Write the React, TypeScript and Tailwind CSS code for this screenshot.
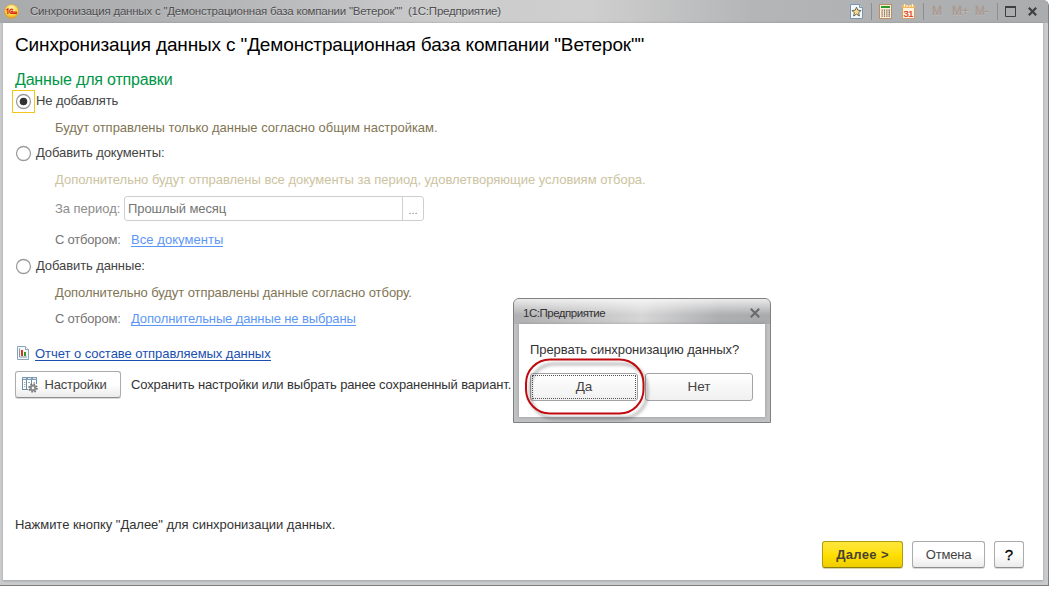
import type { ReactNode } from "react";

function Radio({ checked = false }: { checked?: boolean }) {
  return (
    <span
      className={
        checked
          ? "flex h-[23px] w-[23px] shrink-0 items-center justify-center border border-[#f3c61c]"
          : "flex h-[23px] w-[23px] shrink-0 items-center justify-center"
      }
    >
      <svg width="17" height="17" viewBox="0 0 17 17">
        <circle cx="8.5" cy="8.5" r="7" fill="#fff" stroke="#9c9c9c" strokeWidth="1.3" />
        {checked && <circle cx="8.5" cy="8.5" r="3.8" fill="#333" />}
      </svg>
    </span>
  );
}

function RadioRow({ checked, className, children }: { checked?: boolean; className: string; children: ReactNode }) {
  return (
    <div className={`${className} -ml-[3px] flex h-[23px] items-center`}>
      <Radio checked={checked} />
      <span className="-mt-px ml-px tracking-[-0.1px]">{children}</span>
    </div>
  );
}

function StarDoc() {
  return (
    <svg width="13" height="15" viewBox="0 0 13 15">
      <path d="M.5.5h9l3 3v11H.5z" fill="#f4f8fb" stroke="#7b96ab" />
      <path d="M9.5.5v3h3" fill="#c8dae6" stroke="#7b96ab" />
      <path d="M6.5 3.2l1.3 3 3.3.3-2.500 2.200.8 3.300-2.900-1.800-2.900 1.800.8-3.300-2.500-2.200 3.300-.3z" fill="#fbd98c" stroke="#5b5b50" strokeWidth=".9" />
    </svg>
  );
}

function Calculator() {
  return (
    <svg width="13" height="15" viewBox="0 0 13 15">
      <rect x=".5" y=".5" width="12" height="14" fill="#fdf0d8" stroke="#b98f68" />
      <rect x="2" y="2" width="9" height="2" fill="#2c9a2a" />
      {[5.5, 7.5, 9.5, 11.5].map((y) => (
        <g key={y} fill="#6b4b38">
          <rect x="2.5" y={y} width="1.2" height="1.2" />
          <rect x="4.9" y={y} width="1.2" height="1.2" />
          <rect x="7.3" y={y} width="1.2" height="1.2" />
          <rect x="9.6" y={y} width="1.2" height="1.2" fill="#333" />
        </g>
      ))}
    </svg>
  );
}

function CalendarIcon() {
  return (
    <svg width="13" height="15" viewBox="0 0 13 15">
      <rect x=".5" y="1.5" width="12" height="13" fill="#fdf3dc" stroke="#cf9f6e" />
      <rect x="0" y="1" width="13" height="3" fill="#f0b565" />
      <path d="M2.5 0v3M5 1v2M8 1v2M10.5 0v3" stroke="#fff3d0" strokeWidth="1.2" />
      <text x="6.5" y="13" textAnchor="middle" fontFamily="Liberation Sans" fontSize="9.500" fill="#e2331c" stroke="#e2331c" strokeWidth=".2" textLength="10">31</text>
    </svg>
  );
}

function ReportIcon() {
  return (
    <svg width="12" height="14" viewBox="0 0 12 14">
      <path d="M.5.5h8l3 3v10H.5z" fill="#f3f8fb" stroke="#8ca3b5" />
      <path d="M8.5.5v3h3" fill="#fff" stroke="#8ca3b5" />
      <path d="M2.5 2.500v8.500h7.500" fill="none" stroke="#8297a8" />
      <rect x="4" y="4" width="2" height="6" fill="#e0301e" />
      <rect x="7" y="6" width="2" height="4" fill="#2c9a2a" />
    </svg>
  );
}

function SettingsIcon() {
  return (
    <svg width="16" height="16" viewBox="0 0 16 16">
      <rect x=".5" y=".5" width="14" height="12" fill="#fbfdfe" />
      <rect x="0" y="0" width="15" height="3" fill="#7f9cb4" />
      <path d="M1 1.500h3M6 1.500h3M11 1.500h3" stroke="#dce8f0" />
      <path d="M.5 3v9.500M4.500 3v9.500M9.500 3v4M14.500 3v4M0 12.500h6" stroke="#6f8ca5" fill="none" />
      <path d="M2 5.500h1.500M2 7.500h1.500M2 9.500h1.500M6 5.500h2M11.500 5.500h1.500" stroke="#9eb3c4" fill="none" />
      <circle cx="11" cy="11" r="3.900" fill="none" stroke="#777" strokeWidth="1.800" strokeDasharray="1.600 1.460" />
      <circle cx="11" cy="11" r="2.400" fill="#d2d2d2" stroke="#888" strokeWidth="2" />
      <circle cx="11" cy="11" r="1" fill="#fff" />
    </svg>
  );
}

function Divider() {
  return <span className="h-[17px] w-px bg-[#8d8e90]" />;
}

function TitleBar() {
  return (
    <div className="flex h-[23px] shrink-0 items-center rounded-tr-[5px] bg-[linear-gradient(90deg,#a9aaac_0%,#b3b4b6_20%,#cbcbcc_42%,#cfcfcf_56%,#b4b5b7_72%,#abacae_100%)] pr-[11px] pb-px pl-[4px] text-[#4e4e50]">
      <svg width="15" height="15" viewBox="0 0 15 15" className="shrink-0">
        <defs>
          <radialGradient id="logo" cx=".5" cy=".3" r=".7">
            <stop offset="0" stopColor="#fff8c0" />
            <stop offset=".6" stopColor="#fbd946" />
            <stop offset="1" stopColor="#dd9a20" />
          </radialGradient>
        </defs>
        <circle cx="7.500" cy="7.500" r="7" fill="url(#logo)" stroke="#d69a45" strokeWidth=".6" />
        <path d="M2.300 5.900L3.900 4.800V10M9 5.700C7.800 4.500 5.700 5.200 5.700 7.300C5.700 9.200 7 9.500 8.200 9.500H13M8.800 7.300C7.500 6.400 7 8.100 8.300 8.100H13" fill="none" stroke="#d8241b" strokeWidth="1.200" />
      </svg>
      <span className="ml-[11px] text-[11.5px] tracking-[-0.22px] whitespace-pre [text-shadow:0_1px_0_#ffffff60]">
        {'Синхронизация данных с "Демонстрационная база компании "Ветерок""  (1С:Предприятие)'}
      </span>
      <div className="ml-auto flex h-full items-center">
        <StarDoc />
        <span className="ml-[8px] flex"><Divider /></span>
        <span className="ml-[7px]"><Calculator /></span>
        <span className="ml-[10px]"><CalendarIcon /></span>
        <span className="ml-[8px] flex"><Divider /></span>
        <div className="ml-[8px] flex w-[65px] items-center text-[12px] tracking-[-0.1px] text-[#a8978c] [text-shadow:0_1px_0_#ffffff50] [-webkit-text-stroke:0.3px_#a8978c]">
          <span className="w-[20px]">M</span>
          <span className="w-[23px]">M+</span>
          <span>M-</span>
        </div>
        <Divider />
        <svg className="ml-[7px]" width="11" height="11" viewBox="0 0 11 11">
          <path d="M.5 1.500h10v9H.5z" fill="none" stroke="#3f3f41" />
          <path d="M0 1h11" stroke="#3f3f41" strokeWidth="2" />
        </svg>
        <svg className="ml-[12px]" width="9" height="9" viewBox="0 0 9 9">
          <path d="M.8.8l7.400 7.400M8.200.8L.8 8.200" stroke="#3f3f41" strokeWidth="2.200" />
        </svg>
      </div>
    </div>
  );
}

const button =
  "flex h-[27px] items-center justify-center rounded-[3px] border border-[#ababab] border-b-[#8e8e8e] bg-linear-to-b from-white via-white to-[#ebebeb] text-[13px] text-[#444] shadow-[0_1px_0_#9b9b9b60]";

const dialogButton =
  "flex h-[28px] w-[108px] items-center justify-center rounded-[3px] border border-[#a3a3a3] bg-linear-to-b from-white to-[#f0f0f0] text-[13.5px] text-[#444]";

function Dialog() {
  return (
    <div className="absolute top-[298px] left-[513px] flex h-[125px] w-[258px] flex-col rounded-t-[6px] border border-[#818181] bg-[#c0c1c3] px-[5px] pb-[5px]">
      <div className="-mx-[5px] flex h-[25px] shrink-0 items-center rounded-t-[5px] bg-[linear-gradient(180deg,#ffffffc0_0,#ffffff00_16px),linear-gradient(90deg,#b1b1b3_0%,#c9c9ca_35%,#d6d6d7_50%,#aeafb1_80%,#a9aaac_100%)] pt-[3px] pr-[10px] pl-[9px] text-[11.5px] tracking-[-0.48px] text-[#333]">
        <span>1С:Предприятие</span>
        <svg className="ml-auto" width="10" height="10" viewBox="0 0 10 10">
          <path d="M.8.8l8.400 8.400M9.200.8L.8 9.200" stroke="#69696b" strokeWidth="2" />
        </svg>
      </div>
      <div className="flex grow flex-col bg-white pt-[16px] pl-[11px] shadow-[0_0_3px_#77777790]">
        <span className="h-[20px] leading-[20px] tracking-[-0.06px] text-[#333]">Прервать синхронизацию данных?</span>
        <div className="mt-[13px] flex gap-[7px]">
          <button className={`${dialogButton} p-px`}>
            <span className="flex h-full w-full items-center justify-center border border-dotted border-[#555]">Да</span>
          </button>
          <button className={dialogButton}>Нет</button>
        </div>
      </div>
      <svg className="absolute top-[57px] left-[8px]" width="132" height="66" viewBox="0 0 132 66">
        <defs>
          <filter id="soft" x="-10%" y="-10%" width="120%" height="130%">
            <feGaussianBlur stdDeviation="1.500" />
          </filter>
        </defs>
        <rect x="8" y="8" width="117" height="54" rx="24" fill="none" stroke="#000" strokeOpacity=".25" strokeWidth="3" filter="url(#soft)" />
        <rect x="4" y="3.500" width="117.500" height="54" rx="24" fill="none" stroke="#c00a0f" strokeWidth="2" />
      </svg>
    </div>
  );
}

export default function App() {
  return (
    <div className="relative h-[590px] w-[1052px] overflow-hidden bg-white font-['Liberation_Sans',sans-serif] text-[13px] leading-[20px] tracking-[-0.03px] text-[#444]">
      <div className="flex h-[586px] w-[1049px] flex-col rounded-tr-[6px] border-r border-b border-[#7d7d7d] bg-[#cacbcd]">
        <TitleBar />
        <main className="mr-[5px] mb-[4px] ml-[3px] flex grow flex-col border-b border-[#aeb0b2] bg-white pr-[19px] pl-[12px] shadow-[0_0_2px_#77777790]">
          <h1 className="mt-[10px] h-[24px] text-[19px] leading-[24px] tracking-[-0.14px] whitespace-nowrap text-black">
            Синхронизация данных с "Демонстрационная база компании "Ветерок""
          </h1>
          <h2 className="mt-[12px] h-[21px] text-[16px] leading-[21px] tracking-[-0.18px] text-[#009646]">Данные для отправки</h2>

          <RadioRow checked className="">Не добавлять</RadioRow>
          <p className="mt-[5px] ml-[40px] text-[#7f7555]">Будут отправлены только данные согласно общим настройкам.</p>

          <RadioRow className="mt-[4px]">Добавить документы:</RadioRow>
          <p className="mt-[5px] ml-[40px] tracking-[-0.02px] text-[#ccc3a0]">
            Дополнительно будут отправлены все документы за период, удовлетворяющие условиям отбора.
          </p>
          <div className="mt-[6px] ml-[40px] flex h-[25px] items-center text-[#8c8c8c]">
            <span className="w-[69px]">За период:</span>
            <div className="flex h-[25px] w-[300px] rounded-[3px] border border-[#cfcfcf]">
              <span className="grow pl-[3px] leading-[23px] tracking-[-0.08px] text-[#757575]">Прошлый месяц</span>
              <span className="w-[21px] border-l border-[#cfcfcf] text-center text-[11px] leading-[26px] text-[#808080]">...</span>
            </div>
          </div>
          <div className="mt-[9px] ml-[40px] flex h-[20px] text-[#757575]">
            <span className="w-[76px] tracking-[-0.2px]">С отбором:</span>
            <a className="h-[17px] border-b border-[#5d97f5] tracking-[0.06px] text-[#5d97f5]">Все документы</a>
          </div>

          <RadioRow className="mt-[5px]">Добавить данные:</RadioRow>
          <p className="mt-[5px] ml-[40px] tracking-[-0.07px] text-[#7f7555]">Дополнительно будут отправлены данные согласно отбору.</p>
          <div className="mt-[6px] ml-[40px] flex h-[20px] text-[#757575]">
            <span className="w-[76px] tracking-[-0.2px]">С отбором:</span>
            <a className="h-[17px] border-b border-[#5d97f5] tracking-[-0.12px] text-[#5d97f5]">Дополнительные данные не выбраны</a>
          </div>

          <div className="mt-[15px] flex h-[20px]">
            <span className="mt-[2px] ml-[2px] w-[18px]"><ReportIcon /></span>
            <a className="h-[17px] border-b border-[#1a4fb0] tracking-[-0.05px] text-[#1a4fb0]">Отчет о составе отправляемых данных</a>
          </div>
          <div className="mt-[7px] flex items-center">
            <button className={`${button} w-[106px] gap-[7px] pr-[8px] tracking-[-0.2px]`}>
              <SettingsIcon />
              Настройки
            </button>
            <span className="ml-[10px] tracking-[-0.13px] text-[#333]">Сохранить настройки или выбрать ранее сохраненный вариант.</span>
          </div>

          <p className="mt-auto text-[#333]">Нажмите кнопку "Далее" для синхронизации данных.</p>
          <div className="mt-[6px] mb-[12px] flex justify-end gap-[9px]">
            <button className="flex h-[27px] w-[81px] items-center justify-center rounded-[3px] border border-[#b19c0c] border-b-[#8f7e08] bg-linear-to-b from-[#ffe63a] via-[#ffe000] to-[#efcd00] text-[13px] font-bold tracking-[0.35px] text-[#4a4332] shadow-[0_1px_0_#9b8b2060]">
              Далее &gt;
            </button>
            <button className={`${button} w-[73px] tracking-[-0.2px]`}>Отмена</button>
            <button className={`${button} w-[30px]`}>
              <span className="text-[15px] text-black [-webkit-text-stroke:0.3px_black]">?</span>
            </button>
          </div>
        </main>
      </div>
      <Dialog />
    </div>
  );
}
